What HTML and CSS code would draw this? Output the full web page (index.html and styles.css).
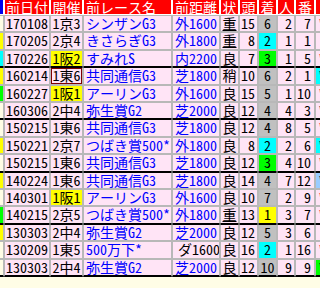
FILE: index.html
```html
<!DOCTYPE html>
<html lang="ja">
<head>
<meta charset="utf-8">
<link rel="stylesheet" href="styles.css">
</head>
<body>
<div class="frame">
<table class="races">
<thead>
<tr>
<th class="c0 h0"></th><th class="c1 hl">前日付</th><th class="c2">開催</th><th class="c3 hl">前レース名</th><th class="c4 hl">前距離</th><th class="c5">状</th><th class="c6">頭</th><th class="c7">着</th><th class="c8">人</th><th class="c9">番</th><th class="c10"></th>
</tr>
</thead>
<tbody>
<tr><td class="c0 cr"></td><td class="date">170108</td><td class="kai">1京3</td><td class="race">シンザンG3</td><td class="dist">外1600</td><td class="baba heavy">重</td><td class="num">15</td><td class="chaku gray">6</td><td class="num">2</td><td class="num ban">7</td><td class="mark red">*</td></tr>
<tr><td class="c0 ye"></td><td class="date">170205</td><td class="kai">2京4</td><td class="race">きさらぎG3</td><td class="dist">外1800</td><td class="baba heavy">重</td><td class="num">8</td><td class="chaku cyan">2</td><td class="num">1</td><td class="num ban">1</td><td class="mark"></td></tr>
<tr class="last"><td class="c0 cy"></td><td class="date">170226</td><td class="kai hl-y">1阪2</td><td class="race">すみれS</td><td class="dist">内2200</td><td class="baba">良</td><td class="num">7</td><td class="chaku green">3</td><td class="num">1</td><td class="num ban">5</td><td class="mark red">*</td></tr>
<tr class="first"><td class="c0 ye"></td><td class="date">160214</td><td class="kai boxed">1東6</td><td class="race">共同通信G3</td><td class="dist">芝1800</td><td class="baba">稍</td><td class="num">10</td><td class="chaku gray">6</td><td class="num">2</td><td class="num ban">1</td><td class="mark bg-cy">*</td></tr>
<tr><td class="c0 gr"></td><td class="date">160227</td><td class="kai hl-y">1阪1</td><td class="race">アーリンG3</td><td class="dist">外1600</td><td class="baba">良</td><td class="num">15</td><td class="chaku gray">5</td><td class="num">1</td><td class="num ban">10</td><td class="mark red">*</td></tr>
<tr class="last"><td class="c0 cr"></td><td class="date">160306</td><td class="kai">2中4</td><td class="race">弥生賞G2</td><td class="dist">芝2000</td><td class="baba">良</td><td class="num">12</td><td class="chaku gray">4</td><td class="num">4</td><td class="num ban">3</td><td class="mark">*</td></tr>
<tr class="first"><td class="c0 cr"></td><td class="date">150215</td><td class="kai">1東6</td><td class="race">共同通信G3</td><td class="dist">芝1800</td><td class="baba">良</td><td class="num">12</td><td class="chaku gray">4</td><td class="num">8</td><td class="num ban">5</td><td class="mark red">*</td></tr>
<tr><td class="c0 ye"></td><td class="date">150221</td><td class="kai">2京7</td><td class="race">つばき賞500*</td><td class="dist">外1800</td><td class="baba">良</td><td class="num">8</td><td class="chaku cyan">2</td><td class="num">2</td><td class="num ban">6</td><td class="mark bg-cy">*</td></tr>
<tr class="last"><td class="c0 cr"></td><td class="date">150215</td><td class="kai">1東6</td><td class="race">共同通信G3</td><td class="dist">芝1800</td><td class="baba">良</td><td class="num">12</td><td class="chaku green">3</td><td class="num">4</td><td class="num ban">10</td><td class="mark red">*</td></tr>
<tr class="first"><td class="c0 ye"></td><td class="date">140224</td><td class="kai">1東6</td><td class="race">共同通信G3</td><td class="dist">芝1800</td><td class="baba">良</td><td class="num">14</td><td class="chaku gray">4</td><td class="num">7</td><td class="num ban">12</td><td class="mark bg-lb">*</td></tr>
<tr><td class="c0 cr"></td><td class="date">140301</td><td class="kai hl-y">1阪1</td><td class="race">アーリンG3</td><td class="dist">外1600</td><td class="baba">良</td><td class="num">10</td><td class="chaku gray">7</td><td class="num">2</td><td class="num ban">9</td><td class="mark red">*</td></tr>
<tr class="last"><td class="c0 gr"></td><td class="date">140215</td><td class="kai">2京5</td><td class="race">つばき賞500*</td><td class="dist">外1800</td><td class="baba heavy">重</td><td class="num">13</td><td class="chaku yellow">1</td><td class="num">3</td><td class="num ban">7</td><td class="mark red">*</td></tr>
<tr class="first"><td class="c0 ye"></td><td class="date">130303</td><td class="kai">2中4</td><td class="race">弥生賞G2</td><td class="dist">芝2000</td><td class="baba">良</td><td class="num">12</td><td class="chaku gray">5</td><td class="num">3</td><td class="num ban">6</td><td class="mark"></td></tr>
<tr><td class="c0 cr"></td><td class="date">130209</td><td class="kai">1東5</td><td class="race">500万下*</td><td class="dist dirt">ダ1600</td><td class="baba">良</td><td class="num">16</td><td class="chaku cyan">2</td><td class="num">1</td><td class="num ban">16</td><td class="mark red">*</td></tr>
<tr class="last end"><td class="c0 cr"></td><td class="date">130303</td><td class="kai">2中4</td><td class="race">弥生賞G2</td><td class="dist">芝2000</td><td class="baba">良</td><td class="num">12</td><td class="chaku gray">10</td><td class="num">9</td><td class="num ban">9</td><td class="mark bg-gr">*</td></tr>
</tbody>
</table>
</div>
</body>
</html>
```

FILE: styles.css
```css
html, body {
  margin: 0;
  padding: 0;
  background: #fffde6;
}

.frame {
  width: 320px;
  height: 288px;
  overflow: hidden;
}

.races {
  margin: -1px 0 0 -1px;
  width: 348px;
  table-layout: fixed;
  border-collapse: separate;
  border-spacing: 0;
  font-family: "Noto Sans Mono CJK JP", "Noto Sans CJK JP", monospace;
  font-size: 14px;
  line-height: 15.4px;
}

.races th,
.races td {
  box-sizing: border-box;
  padding: 0;
  white-space: nowrap;
  overflow: hidden;
}

.races th {
  background: #ff0000;
  color: #ffffff;
  font-weight: normal;
  border: 1px solid #ffffff;
  line-height: 14px;
  text-align: center;
}

.races th.hl { text-align: left; padding-left: 1px; }
.races th.c3, .races th.c4 { padding-left: 2px; }
.races th.h0 { background: #0000ee; }

.c0 { width: 5px; }
.c1 { width: 46px; }
.c2 { width: 33px; }
.c3 { width: 89px; }
.c4 { width: 48px; }
.c5 { width: 19px; }
.c6 { width: 19px; }
.c7 { width: 19px; }
.c8 { width: 18px; }
.c9 { width: 20px; }
.c10 { width: 32px; }

.races td {
  background: #ffe4f6;
  border: 1px solid #b8b8b8;
  color: #000000;
}

.races tr.first td { border-top-color: #000000; }
.races tr.last td { border-bottom-color: #000000; }
.races tr.end td { border-bottom-width: 2px; }

.races td.cr { background: #fffde6; }
.races td.ye { background: #ffff00; }
.races td.cy { background: #00ffff; }
.races td.gr { background: #00ff00; }

.date {
  color: #800000;
  text-align: center;
}

.kai {
  color: #800000;
  text-align: center;
}

.races td.hl-y { background: #ffff00; }
.races td.boxed { box-shadow: inset 0 0 0 1px #800000; }

.races td.race {
  color: #0000ff;
  padding-left: 2px;
}

.races td.dist {
  color: #0000ff;
  padding-left: 2px;
}

.races td.dirt { color: #000000; padding-left: 5px; }

.baba { text-align: center; }
.heavy { color: #0000ff; text-decoration: underline; }

.races td.num { text-align: right; padding-right: 2px; }
.races td.ban { padding-right: 3px; }

.chaku { text-align: center; }
.races td.gray { background: #c0c0c0; }
.races td.cyan { background: #00ffff; }
.races td.green { background: #00ff00; }
.races td.yellow { background: #ffff00; }

.races td.mark { padding-left: 2px; color: #000000; }
.races td.red { color: #ff0000; }
.races td.bg-cy { background: #00ffff; }
.races td.bg-lb { background: #99ccff; }
.races td.bg-gr { background: #00ff00; }
```
